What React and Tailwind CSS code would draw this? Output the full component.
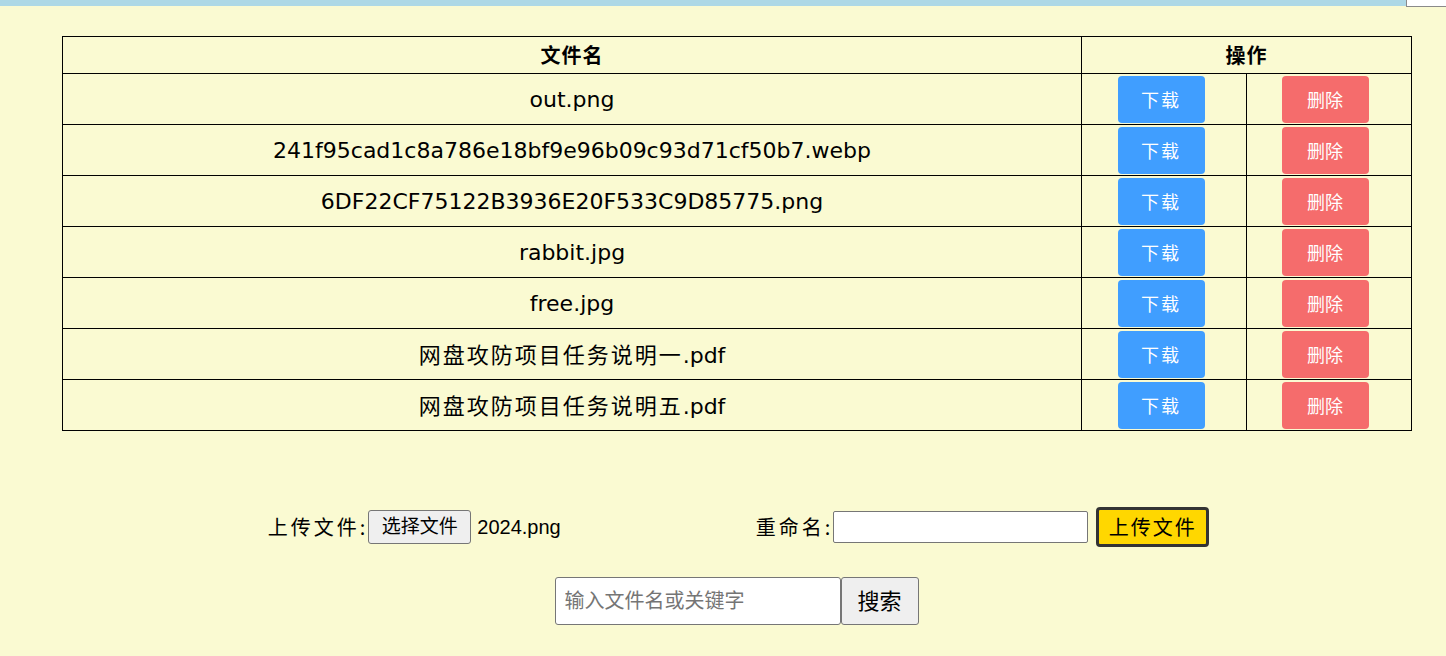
import React from 'react';

const FILES = [
  'out.png',
  '241f95cad1c8a786e18bf9e96b09c93d71cf50b7.webp',
  '6DF22CF75122B3936E20F533C9D85775.png',
  'rabbit.jpg',
  'free.jpg',
  '网盘攻防项目任务说明一.pdf',
  '网盘攻防项目任务说明五.pdf',
];

const kai = { fontFamily: '"Noto Sans CJK SC", serif' };
const comic = { fontFamily: '"Comic Sans MS", "DejaVu Sans", "Noto Sans CJK SC", sans-serif' };
const sys = { fontFamily: 'Arial, "Liberation Sans", "Noto Sans CJK SC", sans-serif' };

// kaiti in the original is spaced wider, so the CJK part gets its own span
function FileName({ name }) {
  const m = name.match(/^([\u4e00-\u9fff]+)(.*)$/);
  if (!m) return name;
  return (
    <>
      <span className="tracking-[2px]" style={kai}>{m[1]}</span>
      {m[2]}
    </>
  );
}

export default function App() {
  return (
    <div className="min-h-[656px] w-full bg-[#fafad2] text-black">
      <div className="flex items-start">
        <div className="h-[6px] flex-1 bg-[#add8e6]" />
        <div className="h-[7px] w-[40px] border-b border-l border-[#8a8a8a] bg-white" />
      </div>

      <div className="ml-[62px] w-[1349px]">
        <table className="mt-[29px] w-full table-fixed border-collapse" style={comic}>
          <colgroup>
            <col className="w-[1019px]" />
            <col className="w-[165px]" />
            <col className="w-[165px]" />
          </colgroup>
          <thead>
            <tr className="h-[37px]">
              <th className="border border-black text-[20px] font-bold tracking-[1px]" style={kai}>文件名</th>
              <th colSpan={2} className="border border-black text-[20px] font-bold tracking-[1px]" style={kai}>操作</th>
            </tr>
          </thead>
          <tbody>
            {FILES.map((f) => (
              <tr key={f} className="h-[51px]">
                <td className="border border-black text-center text-[22px]"><FileName name={f} /></td>
                <td className="border border-black">
                  <div className="flex justify-center pr-[6px]">
                    <button className="h-[47px] w-[87px] rounded-[4px] bg-[#409eff] text-[18px] tracking-[2px] text-white" style={kai}>下载</button>
                  </div>
                </td>
                <td className="border border-black">
                  <div className="flex justify-center pr-[8px]">
                    <button className="h-[47px] w-[87px] rounded-[4px] bg-[#f56c6c] text-[18px] text-white" style={kai}>删除</button>
                  </div>
                </td>
              </tr>
            ))}
          </tbody>
        </table>

        <div className="mt-[76px] flex h-[40px] items-center justify-center gap-[195px] pl-[4px]">
          <div className="flex items-center">
            <span className="text-[20px] tracking-[3px]" style={kai}>上传文件:</span>
            <button className="h-[34px] w-[103px] rounded-[3px] border border-[#767676] bg-[#efefef] text-[19px]" style={sys}>选择文件</button>
            <span className="ml-[6px] text-[20px]" style={sys}>2024.png</span>
          </div>
          <div className="flex items-center">
            <span className="text-[20px] tracking-[3px]" style={kai}>重命名:</span>
            <input className="h-[32px] w-[255px] rounded-[2px] border border-[#767676] bg-white" />
            <button className="ml-[8px] h-[40px] w-[113px] rounded-[4px] border-[3px] border-[#333] bg-[#ffd700] text-[20px] tracking-[2px]" style={kai}>上传文件</button>
          </div>
        </div>

        <div className="mt-[30px] flex justify-center">
          <input
            placeholder="输入文件名或关键字"
            className="h-[48px] w-[286px] rounded-[3px] border border-[#767676] bg-white px-[9px] text-[20px] placeholder-[#757575]"
            style={sys}
          />
          <button className="h-[48px] w-[78px] rounded-[3px] border border-[#767676] bg-[#efefef] text-[22px]" style={sys}>搜索</button>
        </div>
      </div>
    </div>
  );
}
